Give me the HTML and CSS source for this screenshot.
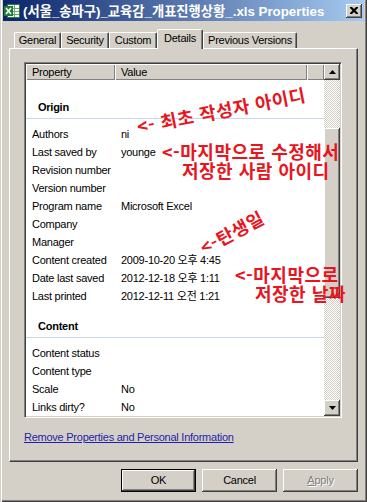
FILE: index.html
```html
<!DOCTYPE html>
<html lang="ko">
<head>
<meta charset="utf-8">
<title>Properties</title>
<link rel="stylesheet" href="styles.css">
</head>
<body>
<div class="window">
  <div class="titlebar">
    <svg class="appicon" width="16" height="16" viewBox="0 0 16 16">
      <rect x="3.5" y="1.5" width="12" height="13" fill="#fff" stroke="#2b7a3b"/>
      <path d="M7 5.5h8M7 8.5h8M7 11.5h8M10.5 2v12" stroke="#6aa86f" stroke-width="1"/>
      <rect x="0" y="3" width="9" height="10" fill="#1f7a3a"/>
      <path d="M2 5l5 6M7 5l-5 6" stroke="#fff" stroke-width="1.6"/>
    </svg>
    <span class="title">(서울_송파구)_교육감_개표진행상황_.xls Properties</span>
    <span class="closebtn">
      <svg width="8" height="7" viewBox="0 0 8 7"><path d="M0 0h2l2 2 2-2h2v1l-2.5 2.5L8 6v1H6L4 5 2 7H0V6l2.5-2.5L0 1z" fill="#000"/></svg>
    </span>
  </div>
  <div class="content">
    <div class="tabs">
      <div class="tab w-general">General</div>
      <div class="tab w-security">Security</div>
      <div class="tab w-custom">Custom</div>
      <div class="tab tab-active w-details">Details</div>
      <div class="tab w-prev">Previous Versions</div>
    </div>
    <div class="panel">
      <div class="listview">
        <div class="listmain">
          <div class="lvheader">
            <div class="hcol hprop">Property</div>
            <div class="hcol hval">Value</div>
            <div class="hcol hrest"></div>
          </div>
          <div class="group g1">Origin</div>
          <div class="rows">
            <div class="row"><span class="p">Authors</span><span class="v">ni</span></div>
            <div class="row"><span class="p">Last saved by</span><span class="v">younge</span></div>
            <div class="row"><span class="p">Revision number</span><span class="v"></span></div>
            <div class="row"><span class="p">Version number</span><span class="v"></span></div>
            <div class="row"><span class="p">Program name</span><span class="v">Microsoft Excel</span></div>
            <div class="row"><span class="p">Company</span><span class="v"></span></div>
            <div class="row"><span class="p">Manager</span><span class="v"></span></div>
            <div class="row"><span class="p">Content created</span><span class="v">2009-10-20 오후 4:45</span></div>
            <div class="row"><span class="p">Date last saved</span><span class="v">2012-12-18 오후 1:11</span></div>
            <div class="row"><span class="p">Last printed</span><span class="v">2012-12-11 오전 1:21</span></div>
          </div>
          <div class="group g2">Content</div>
          <div class="rows">
            <div class="row"><span class="p">Content status</span><span class="v"></span></div>
            <div class="row"><span class="p">Content type</span><span class="v"></span></div>
            <div class="row"><span class="p">Scale</span><span class="v">No</span></div>
            <div class="row"><span class="p">Links dirty?</span><span class="v">No</span></div>
          </div>
        </div>
        <div class="scrollbar">
          <div class="sbtn"><svg width="7" height="4" viewBox="0 0 7 4"><path d="M3.5 0L7 4H0z" fill="#000"/></svg></div>
          <div class="sthumb"></div>
          <div class="sspace"></div>
          <div class="sbtn"><svg width="7" height="4" viewBox="0 0 7 4"><path d="M0 0h7L3.5 4z" fill="#000"/></svg></div>
        </div>
      </div>
      <a class="link" href="#">Remove Properties and Personal Information</a>
    </div>
    <div class="buttons">
      <div class="btn btn-default">OK</div>
      <div class="btn">Cancel</div>
      <div class="btn btn-disabled"><u>A</u>pply</div>
    </div>
  </div>

  <div class="note note1">&lt;- 최초 작성자 아이디</div>
  <div class="note note2"><span class="l1">&lt;-마지막으로 수정해서</span><span class="l2">저장한 사람 아이디</span></div>
  <div class="note note3">&lt;-탄생일</div>
  <div class="note note4"><span class="l1">&lt;-마지막으로</span><span class="l2">저장한 날짜</span></div>
</div>
</body>
</html>
```
FILE: styles.css
```css
* { box-sizing: border-box; }

body {
  margin: 0;
  font-family: "Liberation Sans", Arial, "Noto Sans CJK KR", sans-serif;
  font-size: 11px;
  letter-spacing: -0.25px;
  color: #000;
  background: #D4D0C8;
}

.window {
  width: 367px;
  height: 502px;
  background: #D4D0C8;
  padding: 0 3px 3px 3px;
  box-shadow: inset 1px 0 0 #D4D0C8, inset 2px 0 0 #fff, inset -1px -1px 0 #404040, inset -2px -2px 0 #808080;
  position: relative;
  overflow: hidden;
  display: flex;
  flex-direction: column;
}

.titlebar {
  height: 21px;
  flex: none;
  display: flex;
  align-items: center;
  background: linear-gradient(to right, #0A246A, #A6CAF0);
  padding: 0 2px 0 1px;
}

.appicon { flex: none; }

.title {
  flex: 1;
  margin-left: 3px;
  color: #fff;
  font-weight: bold;
  font-size: 13.3px;
  letter-spacing: 0;
  white-space: nowrap;
  overflow: hidden;
}

.closebtn {
  flex: none;
  width: 16px;
  height: 14px;
  background: #D4D0C8;
  box-shadow: inset -1px -1px 0 #404040, inset 1px 1px 0 #fff, inset -2px -2px 0 #808080;
  display: flex;
  align-items: center;
  justify-content: center;
}

.content {
  flex: 1;
  padding: 0 6px;
  display: flex;
  flex-direction: column;
}

.tabs {
  display: flex;
  align-items: flex-end;
  height: 19px;
  margin-top: 8px;
  padding-left: 5px;
  position: relative;
  z-index: 1;
}

.tab {
  height: 16px;
  line-height: 15px;
  text-align: center;
  background: #D4D0C8;
  border-top: 1px solid #fff;
  border-left: 1px solid #fff;
  border-right: 1px solid #404040;
  box-shadow: inset -1px 0 0 #808080;
  border-radius: 2px 2px 0 0;
  white-space: nowrap;
}

.tab-active {
  height: 20px;
  margin-bottom: -1px;
  line-height: 17px;
}

.w-general { width: 47px; }
.w-security { width: 48px; }
.w-custom { width: 48px; }
.w-details { width: 46px; }
.w-prev { width: 94px; }

.panel {
  height: 414px;
  flex: none;
  border-top: 1px solid #fff;
  border-left: 1px solid #fff;
  border-right: 1px solid #404040;
  border-bottom: 1px solid #404040;
  box-shadow: inset -1px -1px 0 #808080;
  padding: 13px 15px 0 14px;
}

.listview {
  width: 318px;
  height: 356px;
  display: flex;
  border: 1px solid;
  border-color: #808080 #fff #fff #808080;
  box-shadow: inset 1px 1px 0 #404040, inset -1px -1px 0 #D4D0C8;
  padding: 1px;
  background: #fff;
}

.listmain {
  flex: 1;
  min-width: 0;
  display: flex;
  flex-direction: column;
}

.lvheader {
  height: 16px;
  flex: none;
  display: flex;
}

.hcol {
  background: #D4D0C8;
  box-shadow: inset 1px 1px 0 #fff, inset -1px -1px 0 #808080;
  padding-left: 6px;
  line-height: 16px;
}

.hprop { width: 89px; }
.hval { width: 192px; }
.hrest { flex: 1; }

.group {
  font-weight: bold;
  padding-left: 12px;
  line-height: 18px;
  border-bottom: 1px solid #C9D6E6;
}

.g1 { padding-top: 18px; padding-bottom: 2px; }
.g2 { padding-top: 12px; padding-bottom: 2px; }

.rows { margin-top: 6px; }

.row {
  display: flex;
  height: 18px;
  line-height: 18px;
  white-space: nowrap;
}

.p { width: 89px; padding-left: 6px; flex: none; }
.v { padding-left: 6px; }

.scrollbar {
  width: 16px;
  flex: none;
  display: flex;
  flex-direction: column;
  background-color: #fff;
  background-image: conic-gradient(#fff 25%, #D4D0C8 0 50%, #fff 0 75%, #D4D0C8 0);
  background-size: 2px 2px;
}

.sbtn {
  height: 16px;
  flex: none;
  background: #D4D0C8;
  box-shadow: inset -1px -1px 0 #404040, inset 1px 1px 0 #fff, inset -2px -2px 0 #808080;
  display: flex;
  align-items: center;
  justify-content: center;
}

.sthumb {
  height: 170px;
  margin-top: 48px;
  flex: none;
  background: #D4D0C8;
  box-shadow: inset -1px -1px 0 #404040, inset 1px 1px 0 #fff, inset -2px -2px 0 #808080;
}

.sspace { flex: 1; }

.link {
  display: block;
  margin-top: 13px;
  line-height: 13px;
  color: #1F1FA8;
  text-decoration: underline;
  white-space: nowrap;
}

.buttons {
  display: flex;
  justify-content: flex-end;
  gap: 6px;
  margin-top: 7px;
}

.btn {
  width: 75px;
  height: 23px;
  line-height: 23px;
  text-align: center;
  background: #D4D0C8;
  box-shadow: inset -1px -1px 0 #404040, inset 1px 1px 0 #fff, inset -2px -2px 0 #808080;
}

.btn-default {
  border: 1px solid #000;
  line-height: 21px;
}

.btn-disabled {
  color: #808080;
  text-shadow: 1px 1px 0 #fff;
}

.note {
  position: absolute;
  color: #E8141E;
  font-family: "Noto Sans CJK KR", sans-serif;
  font-weight: bold;
  font-size: 18px;
  letter-spacing: 0.5px;
  line-height: 19px;
  white-space: nowrap;
}

.note .l1, .note .l2 { display: block; }

.note1 {
  left: 137px;
  top: 117px;
  transform-origin: 0 50%;
  transform: rotate(-11deg);
}

.note2 { left: 162px; top: 142px; }
.note2 .l2 { padding-left: 20px; }

.note3 {
  left: 201px;
  top: 239px;
  transform-origin: 0 50%;
  transform: rotate(-28deg);
}

.note4 { left: 235px; top: 265px; }
.note4 .l2 { padding-left: 20px; }
```
